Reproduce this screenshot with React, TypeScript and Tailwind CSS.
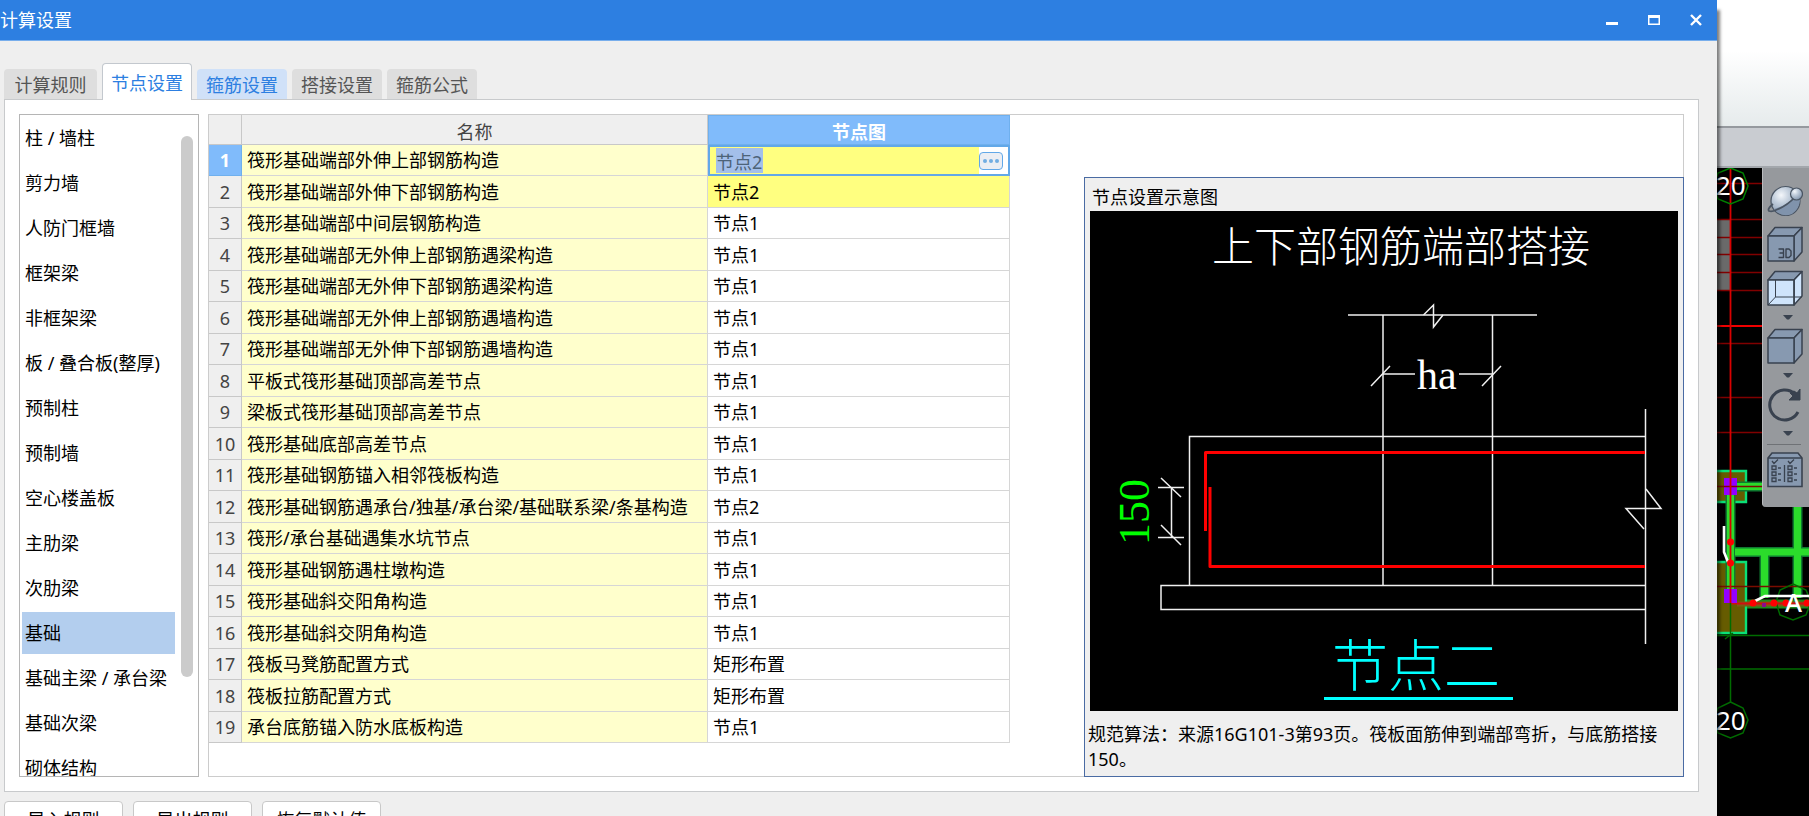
import React, { useState } from "react";
import clsx from "clsx";

const tabs = ["计算规则", "节点设置", "箍筋设置", "搭接设置", "箍筋公式"];

const categories = [
  "柱 / 墙柱",
  "剪力墙",
  "人防门框墙",
  "框架梁",
  "非框架梁",
  "板 / 叠合板(整厚)",
  "预制柱",
  "预制墙",
  "空心楼盖板",
  "主肋梁",
  "次肋梁",
  "基础",
  "基础主梁 / 承台梁",
  "基础次梁",
  "砌体结构",
];

const rows = [
  { name: "筏形基础端部外伸上部钢筋构造", value: "节点2" },
  { name: "筏形基础端部外伸下部钢筋构造", value: "节点2", changed: true },
  { name: "筏形基础端部中间层钢筋构造", value: "节点1" },
  { name: "筏形基础端部无外伸上部钢筋遇梁构造", value: "节点1" },
  { name: "筏形基础端部无外伸下部钢筋遇梁构造", value: "节点1" },
  { name: "筏形基础端部无外伸上部钢筋遇墙构造", value: "节点1" },
  { name: "筏形基础端部无外伸下部钢筋遇墙构造", value: "节点1" },
  { name: "平板式筏形基础顶部高差节点", value: "节点1" },
  { name: "梁板式筏形基础顶部高差节点", value: "节点1" },
  { name: "筏形基础底部高差节点", value: "节点1" },
  { name: "筏形基础钢筋锚入相邻筏板构造", value: "节点1" },
  { name: "筏形基础钢筋遇承台/独基/承台梁/基础联系梁/条基构造", value: "节点2" },
  { name: "筏形/承台基础遇集水坑节点", value: "节点1" },
  { name: "筏形基础钢筋遇柱墩构造", value: "节点1" },
  { name: "筏形基础斜交阳角构造", value: "节点1" },
  { name: "筏形基础斜交阴角构造", value: "节点1" },
  { name: "筏板马凳筋配置方式", value: "矩形布置" },
  { name: "筏板拉筋配置方式", value: "矩形布置" },
  { name: "承台底筋锚入防水底板构造", value: "节点1" },
];

const TitleBar: React.FC = () => (
  <header className="flex h-[41px] shrink-0 items-center justify-between border-b border-[#78aeec] bg-[#2d7fe1] pr-[15px] text-white">
    <h1>计算设置</h1>
    <div className="flex gap-[30px]">
      <button aria-label="最小化">
        <svg width="12" height="12" viewBox="0 0 12 12">
          <rect y="8" width="12" height="3" fill="white" />
        </svg>
      </button>
      <button aria-label="最大化">
        <svg width="12" height="12" viewBox="0 0 12 12">
          <path d="M0 1h12v10H0zM1.5 4v5.5h9V4z" fill="white" fillRule="evenodd" />
        </svg>
      </button>
      <button aria-label="关闭">
        <svg width="12" height="12" viewBox="0 0 12 12">
          <path d="M1 1l10 10M11 1L1 11" stroke="white" strokeWidth="2.4" />
        </svg>
      </button>
    </div>
  </header>
);

const CategoryList: React.FC = () => {
  const [active, setActive] = useState("基础");

  return (
    <nav className="relative h-[663px] w-[180px] shrink-0 overflow-hidden border border-[#b5b5b5] bg-white px-0.5 pt-0.5">
      <ul className="flex w-[153px] flex-col gap-[3px]">
        {categories.map((item) => (
          <li key={item}>
            <button
              onClick={() => setActive(item)}
              className={clsx(
                "h-[42px] w-full pl-[3px] text-left whitespace-nowrap",
                item === active && "bg-[#b3ceee]"
              )}
            >
              {item}
            </button>
          </li>
        ))}
      </ul>
      <div className="absolute top-[21px] right-[5px] h-[541px] w-3 rounded-full bg-[#cbcbcb]" />
    </nav>
  );
};

const NodeTable: React.FC = () => {
  const [value, setValue] = useState(rows[0].value);

  return (
    <table className="w-[801px] table-fixed border-separate border-spacing-0 self-start">
      <thead>
        <tr className="h-[30px] bg-[#efefef]">
          <th className="w-[33px] border-r border-b border-[#c8c8c8]" />
          <th className="w-[466px] border-r border-b border-[#c8c8c8] p-0 pt-1 font-normal text-[#444444]">
            名称
          </th>
          <th className="border border-[#6fb0ee] bg-[#80bbfb] p-0 pt-1 font-bold text-white">
            节点图
          </th>
        </tr>
      </thead>
      <tbody>
        {rows.map((row, i) => (
          <tr key={row.name} className="odd:h-[31px] even:h-[32px]">
            <th
              className={clsx(
                "border-r border-b p-0 text-center",
                i === 0
                  ? "border-[#6fb0ee] bg-[#80bbfb] font-bold text-white"
                  : "border-[#c8c8c8] bg-[#efefef] font-normal text-[#444444]"
              )}
            >
              {i + 1}
            </th>
            <td className="border-r border-b border-[#d6d6d6] bg-[#ffffcc] p-0 pl-[5px] whitespace-nowrap">
              {row.name}
            </td>
            {i === 0 ? (
              <td className="border-2 border-[#62a8e8] bg-[#ffff80] p-0">
                <div className="flex h-[27px] items-center justify-between pl-[6px]">
                  <input
                    aria-label={row.name}
                    value={value}
                    onChange={(e) => setValue(e.target.value)}
                    className="h-[25px] w-[47px] bg-[#a3bfea] text-[#4d6378] outline-none"
                  />
                  <div className="flex h-full w-[29px] items-center bg-white">
                    <button
                      aria-label="选择节点图"
                      className="flex h-[18px] w-6 items-center justify-center gap-0.5 rounded border border-[#62a8e8] bg-[#eceef3]"
                    >
                      <span className="size-1 rounded-full bg-[#72ade2]" />
                      <span className="size-1 rounded-full bg-[#72ade2]" />
                      <span className="size-1 rounded-full bg-[#72ade2]" />
                    </button>
                  </div>
                </div>
              </td>
            ) : (
              <td
                className={clsx(
                  "border-r border-b border-[#d6d6d6] p-0 pl-[5px]",
                  row.changed && "bg-[#ffff80]"
                )}
              >
                {row.value}
              </td>
            )}
          </tr>
        ))}
      </tbody>
    </table>
  );
};

const NodeDrawing: React.FC = () => (
  <svg viewBox="0 0 588 500" className="block w-full bg-black" fill="none">
    <text x="122" y="51" fontSize="42" fill="white" className="font-light">
      上下部钢筋端部搭接
    </text>

    {/* column */}
    <g stroke="#f0f0f0" strokeWidth="1.5">
      <path d="M258 104H447" />
      <path d="M333.5 104L343.5 94V116L353 104" />
      <path d="M293 104V375M402.5 104V375" />
      <path d="M293 163H325M369 163H402" />
      <path d="M281 175L300 155M392 175L411 155" />
    </g>
    <text
      x="327"
      y="178"
      fontSize="42"
      fill="white"
      className="font-['Liberation_Serif',serif]"
    >
      ha
    </text>

    {/* raft and cushion */}
    <g stroke="#f0f0f0" strokeWidth="1.5">
      <path d="M555 225.5H99.5V374" />
      <path d="M555 374.5H71V398.5H555" />
      <path d="M555.5 198V433" />
      <path d="M556 278L571 297.5H536L554 318" />
      <path d="M68 276.5H94M68 326.5H94M81.5 276V326" />
      <path d="M71 267L91 286M71 314L91 334" />
    </g>

    {/* rebar */}
    <g stroke="#ff0000" strokeWidth="3" strokeLinejoin="round">
      <path d="M555 241.5H115.5V320" />
      <path d="M120 276V355.5H555" />
    </g>

    <text
      transform="translate(59 334) rotate(-90)"
      fontSize="44"
      fill="#00ff00"
      className="font-['Liberation_Serif',serif]"
    >
      150
    </text>
    <text x="242" y="475" fontSize="56" fill="#00ffff" className="font-light">
      节点二
    </text>
    <path d="M234 487.500H423" stroke="#00ffff" strokeWidth="3" />
  </svg>
);

const NodePreview: React.FC = () => (
  <section className="mt-[62px] -mr-px -mb-px ml-auto w-[600px] shrink-0 border border-[#4a6ba3] bg-[#efefef] px-[5px] pb-1">
    <h2 className="h-[33px] pt-[7px] pl-0.5 leading-6">节点设置示意图</h2>
    <NodeDrawing />
    <p className="-ml-0.5 pt-[11px] leading-[25px]">
      规范算法：来源16G101-3第93页。筏板面筋伸到端部弯折，与底筋搭接150。
    </p>
  </section>
);

const Caret: React.FC = () => (
  <button aria-label="更多" className="flex h-[22px] w-full items-center justify-center">
    <svg width="10" height="5" viewBox="0 0 10 5">
      <path d="M0 0h10L6 4.5H4z" fill="#39424f" />
    </svg>
  </button>
);

const Cube: React.FC<{ kind: "label" | "glass" | "solid" }> = ({ kind }) => (
  <svg width="36" height="36" viewBox="0 0 36 36" stroke="#39424f" strokeWidth="1.5" strokeLinejoin="round">
    <path d="M1 10L8 1.500H35L27 10z" fill="#8799b0" />
    <path d="M27 10L35 1.500V26L27 35z" fill={kind === "glass" ? "#cfe4fb" : "#8799b0"} />
    <path d="M1 10H27V35H1z" fill={kind === "glass" ? "#cfe4fb" : "#8799b0"} />
    {kind === "glass" && (
      <path d="M8.500 10V27H35M8.500 27L1 35M27 10V35" fill="none" strokeWidth="1" />
    )}
    {kind === "label" && (
      <path
        d="M11.500 23h5v8.500h-5M12.500 27h4M19 23h3l2 2v4.500l-2 2h-3z"
        fill="none"
        strokeWidth="1.4"
      />
    )}
  </svg>
);

const ViewToolbar: React.FC = () => (
  <div className="absolute top-0 right-0 flex h-[339px] w-[47px] flex-col items-start rounded-bl border-l border-[#b9bbbe] bg-[#96999d] pt-[14px] pl-1">
    <button aria-label="动态观察" className="mb-2">
      <svg width="36" height="36" viewBox="0 0 36 36">
        <defs>
          <radialGradient id="ball" cx="0.35" cy="0.3" r="0.7">
            <stop offset="0" stopColor="#f4f7fb" />
            <stop offset="0.4" stopColor="#c3cfdd" />
            <stop offset="1" stopColor="#8799b0" />
          </radialGradient>
        </defs>
        <circle cx="18.500" cy="19" r="14.500" fill="url(#ball)" stroke="#4a5563" strokeWidth="1.2" />
        <path d="M7 27Q19 24 29 14L33 18Q32 27 25 32Q14 36 7 27z" fill="#8093ac" />
        <path d="M6 22Q0 27 2 29Q5 30 9 28Q20 24 29 14" fill="none" stroke="#4a5563" strokeWidth="1.8" />
        <circle cx="29.500" cy="12" r="6" fill="url(#ball)" stroke="#4a5563" strokeWidth="1.2" />
      </svg>
    </button>
    <button aria-label="三维" className="mb-2">
      <Cube kind="label" />
    </button>
    <button aria-label="线框">
      <Cube kind="glass" />
    </button>
    <Caret />
    <button aria-label="实体">
      <Cube kind="solid" />
    </button>
    <Caret />
    <button aria-label="旋转">
      <svg width="36" height="36" viewBox="0 0 36 36">
        <path d="M28 8A15 15 0 1 0 31 26" fill="none" stroke="#39424f" strokeWidth="3" />
        <path d="M33 3V14H22L26 10L23 7L27 5L30 7z" fill="#39424f" stroke="#39424f" />
      </svg>
    </button>
    <Caret />
    <hr className="mb-[7px] w-[34px] border-[#6f7276]" />
    <button aria-label="显示设置">
      <svg width="36" height="36" viewBox="0 0 36 36" stroke="#39424f" fill="none" strokeWidth="1.3">
        <path d="M1 6L5 1H31L35 6V34.500H1z" fill="#8799b0" strokeWidth="1.6" />
        <path d="M1 6H35M17.500 13V30" />
        <path d="M5 9l2 2.500 4-4M21 9l2 2.500 4-4" />
        <path d="M5 14h4v3.500h-4zM5 20h4v3.500h-4zM5 26h4v3.500h-4zM21 14h4v3.500h-4zM21 20h4v3.500h-4zM21 26h4v3.500h-4z" />
        <path d="M11 16h3M11 22h3M11 28h3M27 16h3M27 22h3M27 28h3" />
      </svg>
    </button>
  </div>
);

const ModelCanvas: React.FC = () => (
  <svg width="92" height="648" viewBox="0 0 92 648" fill="none" className="block">
    <rect y="52" width="13" height="70" fill="#6a6a6a" />
    <path
      d="M0 15.500H92M0 51.500H92M0 69.500H92M0 86.500H92M0 104.500H92M0 122.500H92M0 175.500H92M0 229.500H92M0 264.500H92"
      stroke="#800000"
      strokeWidth="1.5"
    />
    <path d="M0 158H92" stroke="#f00000" strokeWidth="1.8" />

    {/* footings */}
    <path d="M-2 303H29V334H-2zM-2 394H29V465H-2z" fill="#665c00" stroke="#0be077" strokeWidth="2.4" />

    {/* beams */}
    <path d="M13.500 325V434M18 384H92M47.500 384V430M80.500 330V430M20 318.500H92" stroke="#0f7a30" strokeWidth="10" />
    <path d="M13.500 325V434M18 384H92M47.500 384V430M80.500 330V430M20 318.500H92" stroke="#2bdc2b" strokeWidth="7" />
    <path d="M30 436H92" stroke="#1f8a1f" strokeWidth="9" />
    <path d="M20 436H92" stroke="#7c5a14" strokeWidth="5" />
    <path d="M14 435.500H92" stroke="#d01010" strokeWidth="2" />

    <path d="M7 310H20V327H7zM7 421H20V435H7z" fill="#9400ff" />
    <path d="M0 418.500H92M0 318.500H45" stroke="#7a0c00" strokeWidth="1.5" />
    <path d="M13.500 0V435" stroke="#d80000" strokeWidth="1.8" />

    {/* axes */}
    <g stroke="#006c00" strokeWidth="1.5">
      <path d="M0 467.500H92M0 501H92M13.500 435V534M8 471l8-6" />
      <path d="M13.500 0L26 5L31 18L26 31L13.500 36L1 31L-4 18L1 5z" stroke="#008000" />
      <path d="M13.500 534L26 540L31 552L26 565L13.500 570L1 565L-4 552L1 540z" />
      <path d="M76 416L89 422L94 434L89 447L76 452L63 447L59 434L63 422z" />
    </g>

    <path d="M7 358V384L11 394M38 433L48 428H92" stroke="white" strokeWidth="2.6" />
    <g fill="#ff0000">
      <circle cx="13.500" cy="374" r="3.500" />
      <circle cx="13.500" cy="395" r="3.500" />
      <circle cx="36" cy="435" r="3.500" />
      <circle cx="57" cy="435" r="3.500" />
      <circle cx="69" cy="435" r="3.500" />
      <circle cx="90" cy="435" r="3.500" />
    </g>
    <rect x="45" y="435" width="4" height="4" fill="#8b0a8b" />

    <g fill="white" fontSize="26">
      <text x="-1" y="27">20</text>
      <text x="-1" y="562">20</text>
      <text x="68" y="444" className="font-medium">A</text>
    </g>
  </svg>
);

export default function App() {
  const [tab, setTab] = useState("节点设置");

  return (
    <div className="flex h-screen overflow-hidden bg-white font-['Noto_Sans','Noto_Sans_CJK_SC',sans-serif] text-[18px] leading-6 text-black">
      <div className="relative z-10 flex min-w-0 flex-1 flex-col bg-[#efefef] shadow-[3px_10px_3px_#00000080]">
        <TitleBar />
        <main className="flex flex-col pt-[22px] pr-[18px] pl-1">
          <div role="tablist" className="flex items-end gap-[5px]">
            {tabs.map((item) => (
              <button
                key={item}
                role="tab"
                aria-selected={item === tab}
                onClick={() => setTab(item)}
                className={clsx(
                  "rounded-t first:w-[93px]",
                  item === tab
                    ? "relative -mb-px h-[37px] border border-b-0 border-[#c3c8ce] bg-white px-2 pt-1 pb-0.5 text-[#2d7fe1]"
                    : "h-[30px] px-[9px] pt-0.5",
                  item !== tab && item === "箍筋设置" && "bg-[#d0e1f8] text-[#2d7fe1]",
                  item !== tab && item !== "箍筋设置" && "bg-[#dedede] text-[#555555]"
                )}
              >
                {item}
              </button>
            ))}
          </div>
          <div className="flex gap-[9px] border border-[#c8cacc] bg-white p-[14px]">
            <CategoryList />
            <div className="flex min-w-0 flex-1 border border-[#cccccc]">
              <NodeTable />
              <NodePreview />
            </div>
          </div>
          <div className="flex gap-[10px] pt-[9px]">
            {["导入规则", "导出规则", "恢复默认值"].map((item) => (
              <button
                key={item}
                className="h-[38px] w-[119px] shrink-0 rounded border border-[#c8c8c8] bg-white"
              >
                {item}
              </button>
            ))}
          </div>
        </main>
      </div>

      <aside className="flex w-[92px] shrink-0 flex-col">
        <div className="h-32 shrink-0 border-b-2 border-[#95999e] bg-linear-to-b from-white from-40% to-[#e6ebec]" />
        <div className="h-10 shrink-0 border-b-2 border-[#a3a7ac] bg-[#c9ccd1]" />
        <div className="relative flex-1 bg-black">
          <ModelCanvas />
          <ViewToolbar />
        </div>
      </aside>
    </div>
  );
}
